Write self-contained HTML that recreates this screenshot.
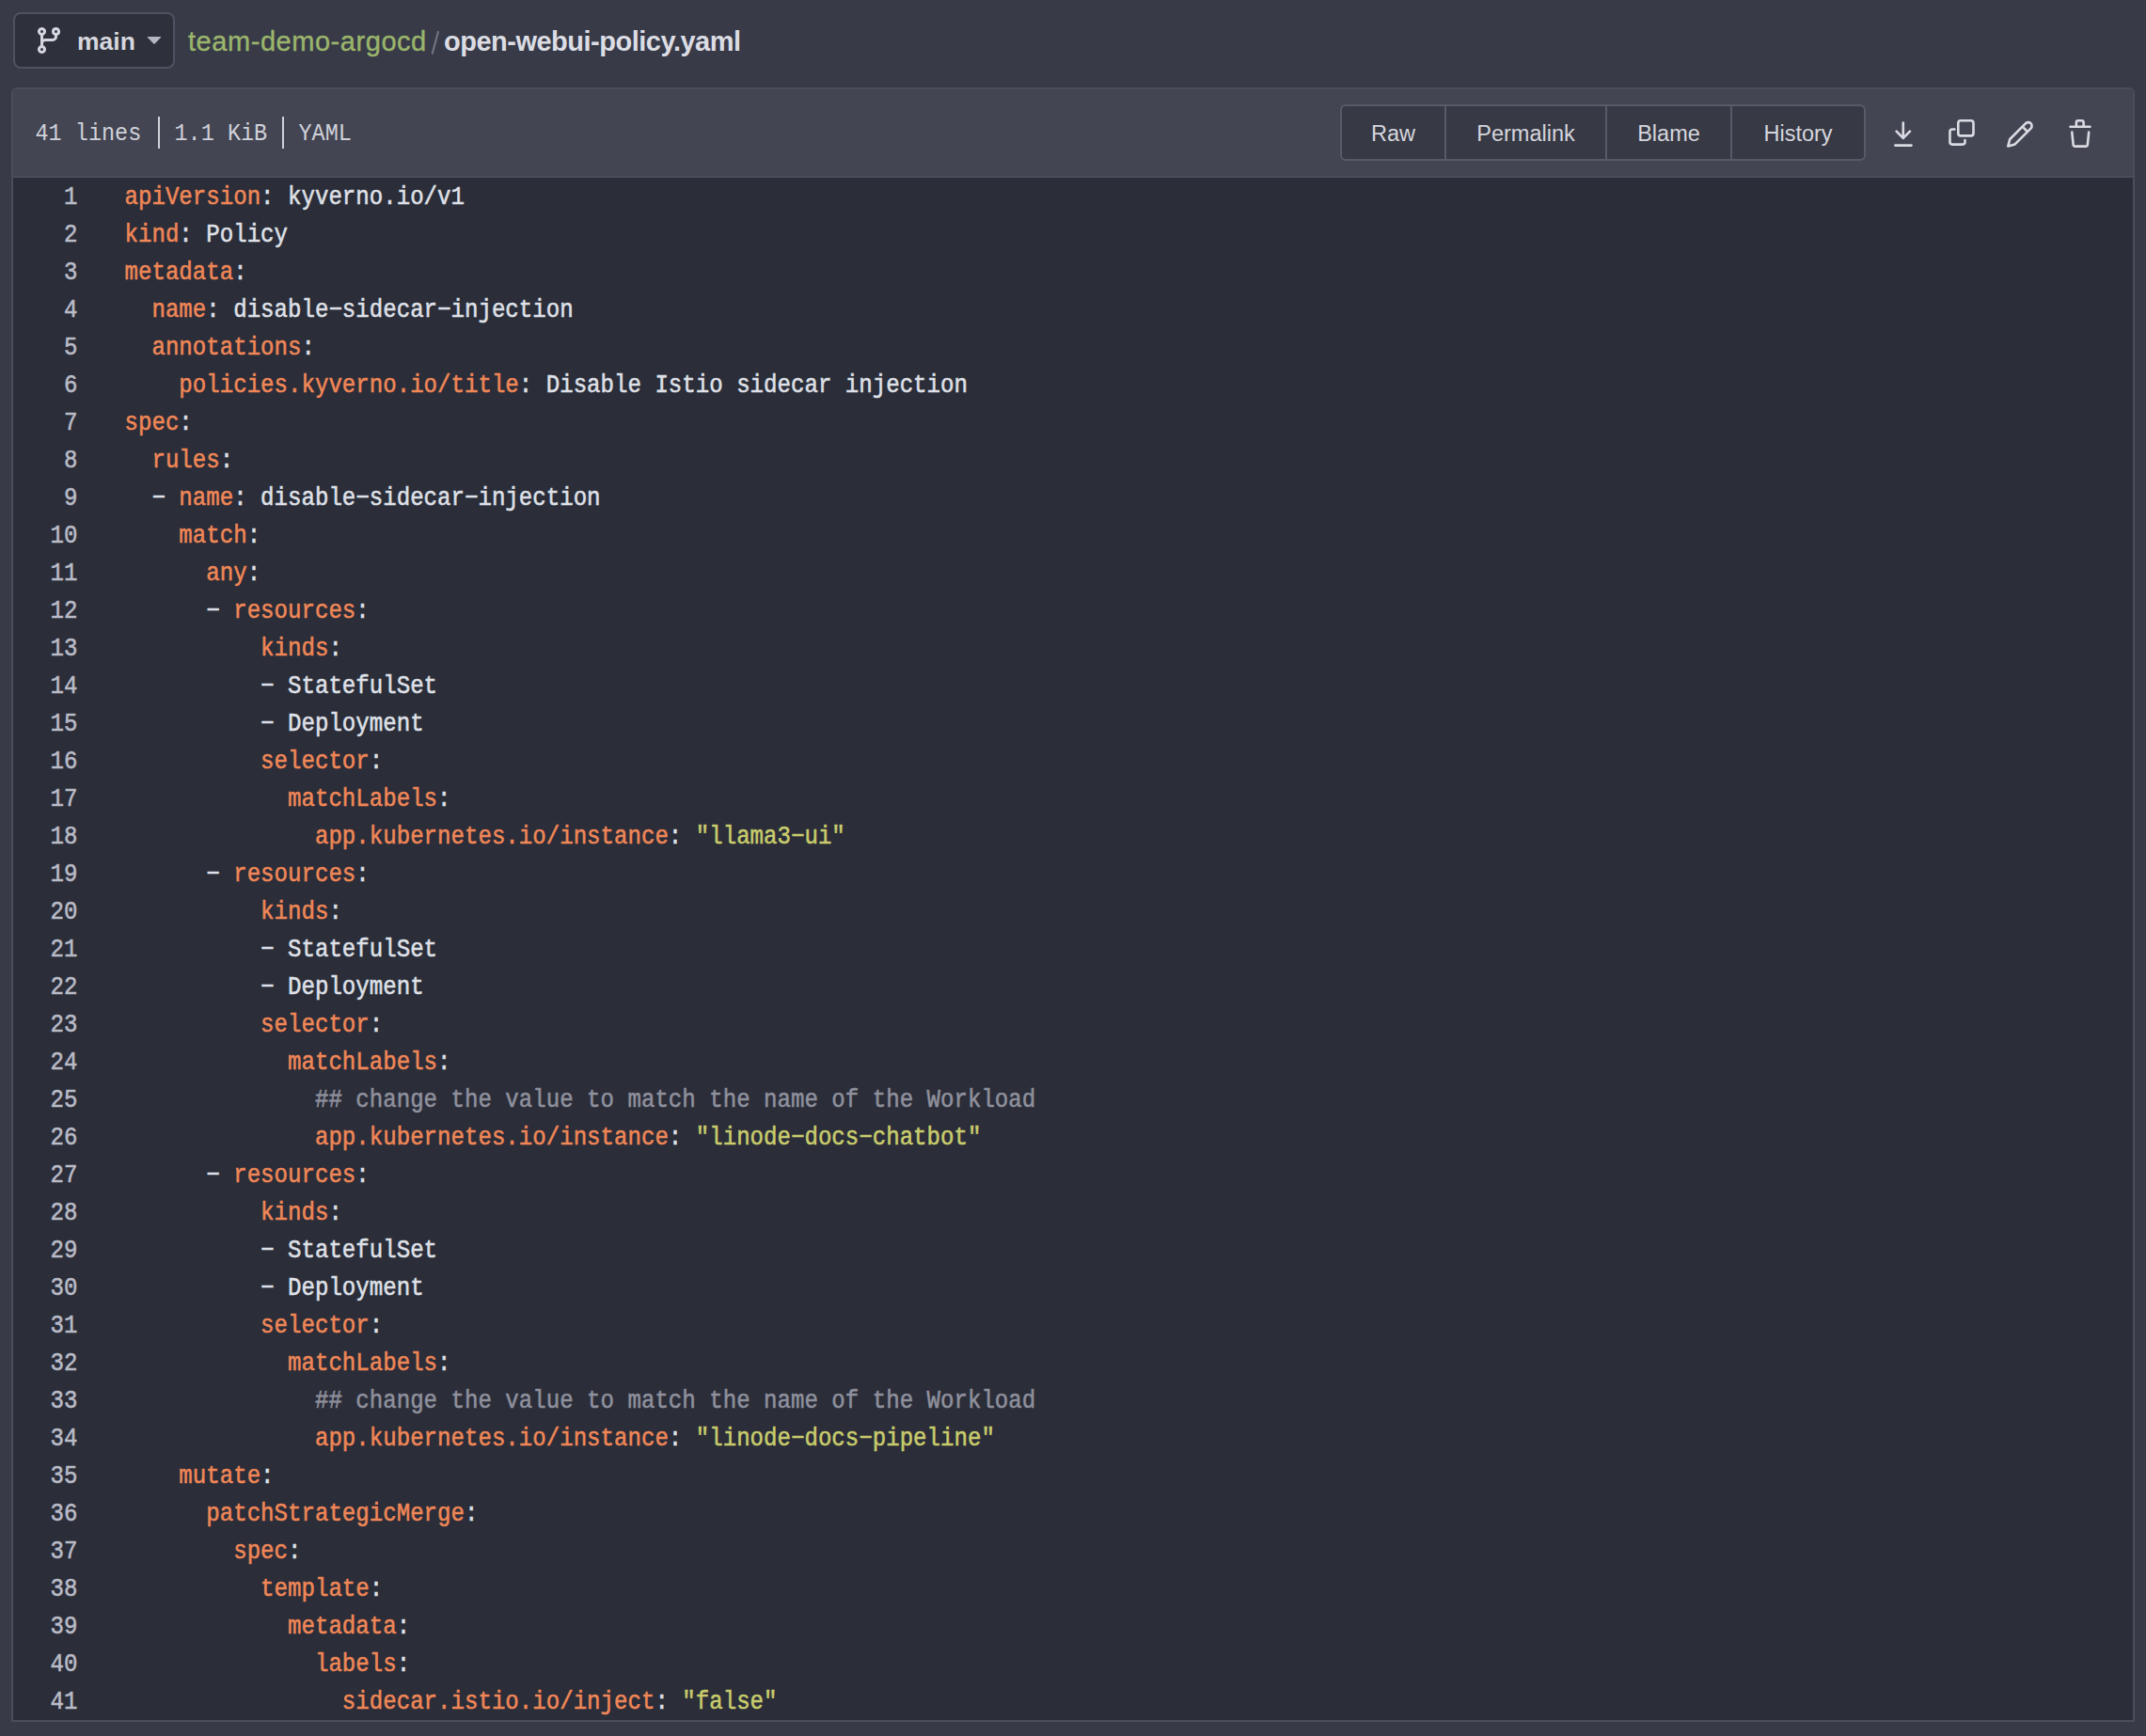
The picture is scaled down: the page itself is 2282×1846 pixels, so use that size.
<!DOCTYPE html>
<html><head><meta charset="utf-8">
<style>
html,body{margin:0;padding:0;}
body{width:2282px;height:1846px;background:#383a47;overflow:hidden;position:relative;font-family:"Liberation Sans",sans-serif;}
.abs{position:absolute;white-space:pre;}
.branch{position:absolute;left:14px;top:13px;width:168px;height:56px;border:2px solid #4f5261;border-radius:8px;background:#2e303b;}
.main{font-weight:bold;font-size:26.5px;color:#d6d7de;line-height:40px;}
.crumb{font-size:29px;line-height:40px;}
.g{color:#9ab56c;letter-spacing:0.55px;-webkit-text-stroke:0.4px currentColor;}
.sl{color:#777a87;}
.fn{color:#dcdde4;font-weight:bold;letter-spacing:-0.5px;}
.box{position:absolute;left:12px;top:93px;width:2254px;height:1734px;border:2px solid #4a4d5a;border-radius:6px 6px 0 0;background:#2b2d39;overflow:hidden;}
.hdr{position:absolute;left:0;top:0;right:0;height:92px;background:#434553;border-bottom:2px solid #4a4d5a;}
.meta{font-family:"Liberation Mono",monospace;font-size:23.5px;color:#d0d1d9;line-height:40px;transform:scaleY(1.12);transform-origin:0 27px;}
.dv{position:absolute;width:2px;background:#cfd0d8;}
.btns{position:absolute;left:1411px;top:16px;width:555px;height:56px;border:2px solid #575a67;border-radius:6px;background:#373945;overflow:hidden;}
.bt{position:absolute;top:1px;height:56px;line-height:56px;font-size:23.5px;color:#d5d6dd;text-align:center;}
.bd{position:absolute;top:0;width:2px;height:56px;background:#575a67;}
.ic{position:absolute;}
.code{position:absolute;left:0;top:94px;right:0;}
.ln{height:40px;line-height:40px;white-space:pre;font-family:"Liberation Mono",monospace;font-size:24.1px;color:#dfe0e7;position:relative;-webkit-text-stroke:0.5px currentColor;}
.ln .n{position:absolute;right:2185.5px;color:#b9bbc6;transform:scaleY(1.12);transform-origin:0 25px;top:2px;}
.ln .t{position:absolute;left:118.5px;transform:scaleY(1.12);transform-origin:0 25px;top:2px;}
.k{color:#ef8757;}
.s{color:#c8cc6c;}
.c{color:#8e909c;}
</style></head><body>
<div class="branch"></div>
<svg class="ic" style="left:36px;top:27px" width="32" height="32" viewBox="0 0 16 16" fill="#d6d7de"><path d="M9.5 3.25a2.25 2.25 0 1 1 3 2.122V6A2.5 2.5 0 0 1 10 8.5H6a1 1 0 0 0-1 1v1.128a2.251 2.251 0 1 1-1.5 0V5.372a2.25 2.25 0 1 1 1.5 0v1.836A2.493 2.493 0 0 1 6 7h4a1 1 0 0 0 1-1v-.628A2.25 2.25 0 0 1 9.5 3.25Zm-6 0a.75.75 0 1 0 1.5 0 .75.75 0 0 0-1.5 0Zm8.25-.75a.75.75 0 1 0 0 1.5.75.75 0 0 0 0-1.5ZM4.25 12a.75.75 0 1 0 0 1.5.75.75 0 0 0 0-1.5Z"/></svg>
<div class="abs main" style="left:82px;top:24px">main</div>
<svg class="ic" style="left:148px;top:25px" width="32" height="32" viewBox="0 0 16 16" fill="#b4b6c0"><path d="m4.427 7.427 3.396 3.396a.25.25 0 0 0 .354 0l3.396-3.396A.25.25 0 0 0 11.396 7H4.604a.25.25 0 0 0-.177.427Z"/></svg>
<div class="abs crumb" style="left:200px;top:24px"><span class="g">team-demo-argocd</span></div>
<svg class="ic" style="left:450px;top:25px" width="30" height="40" viewBox="450 25 30 40"><path d="M459.8 56.6L466 33.8" stroke="#6f7280" stroke-width="2.2" stroke-linecap="round"/></svg>
<div class="abs crumb fn" style="left:472px;top:24px">open-webui-policy.yaml</div>
<div class="box">
 <div class="hdr">
  <div class="abs meta" style="left:23.5px;top:28px">41 lines</div>
  <div class="dv" style="left:154px;top:29px;height:34px"></div>
  <div class="abs meta" style="left:171.5px;top:28px">1.1 KiB</div>
  <div class="dv" style="left:286px;top:29px;height:34px"></div>
  <div class="abs meta" style="left:303.5px;top:28px">YAML</div>
  <div class="btns">
   <div class="bt" style="left:0;width:109px">Raw</div>
   <div class="bd" style="left:109px"></div>
   <div class="bt" style="left:111px;width:169px">Permalink</div>
   <div class="bd" style="left:280px"></div>
   <div class="bt" style="left:282px;width:131px">Blame</div>
   <div class="bd" style="left:413px"></div>
   <div class="bt" style="left:415px;width:140px">History</div>
  </div>
 </div>
 <div class="code">
<div class="ln"><span class="n">1</span><span class="t"><span class="k">apiVersion</span>: kyverno.io/v1</span></div>
<div class="ln"><span class="n">2</span><span class="t"><span class="k">kind</span>: Policy</span></div>
<div class="ln"><span class="n">3</span><span class="t"><span class="k">metadata</span>:</span></div>
<div class="ln"><span class="n">4</span><span class="t">  <span class="k">name</span>: disable−sidecar−injection</span></div>
<div class="ln"><span class="n">5</span><span class="t">  <span class="k">annotations</span>:</span></div>
<div class="ln"><span class="n">6</span><span class="t">    <span class="k">policies.kyverno.io/title</span>: Disable Istio sidecar injection</span></div>
<div class="ln"><span class="n">7</span><span class="t"><span class="k">spec</span>:</span></div>
<div class="ln"><span class="n">8</span><span class="t">  <span class="k">rules</span>:</span></div>
<div class="ln"><span class="n">9</span><span class="t">  − <span class="k">name</span>: disable−sidecar−injection</span></div>
<div class="ln"><span class="n">10</span><span class="t">    <span class="k">match</span>:</span></div>
<div class="ln"><span class="n">11</span><span class="t">      <span class="k">any</span>:</span></div>
<div class="ln"><span class="n">12</span><span class="t">      − <span class="k">resources</span>:</span></div>
<div class="ln"><span class="n">13</span><span class="t">          <span class="k">kinds</span>:</span></div>
<div class="ln"><span class="n">14</span><span class="t">          − StatefulSet</span></div>
<div class="ln"><span class="n">15</span><span class="t">          − Deployment</span></div>
<div class="ln"><span class="n">16</span><span class="t">          <span class="k">selector</span>:</span></div>
<div class="ln"><span class="n">17</span><span class="t">            <span class="k">matchLabels</span>:</span></div>
<div class="ln"><span class="n">18</span><span class="t">              <span class="k">app.kubernetes.io/instance</span>: <span class="s">&quot;llama3−ui&quot;</span></span></div>
<div class="ln"><span class="n">19</span><span class="t">      − <span class="k">resources</span>:</span></div>
<div class="ln"><span class="n">20</span><span class="t">          <span class="k">kinds</span>:</span></div>
<div class="ln"><span class="n">21</span><span class="t">          − StatefulSet</span></div>
<div class="ln"><span class="n">22</span><span class="t">          − Deployment</span></div>
<div class="ln"><span class="n">23</span><span class="t">          <span class="k">selector</span>:</span></div>
<div class="ln"><span class="n">24</span><span class="t">            <span class="k">matchLabels</span>:</span></div>
<div class="ln"><span class="n">25</span><span class="t">              <span class="c">## change the value to match the name of the Workload</span></span></div>
<div class="ln"><span class="n">26</span><span class="t">              <span class="k">app.kubernetes.io/instance</span>: <span class="s">&quot;linode−docs−chatbot&quot;</span></span></div>
<div class="ln"><span class="n">27</span><span class="t">      − <span class="k">resources</span>:</span></div>
<div class="ln"><span class="n">28</span><span class="t">          <span class="k">kinds</span>:</span></div>
<div class="ln"><span class="n">29</span><span class="t">          − StatefulSet</span></div>
<div class="ln"><span class="n">30</span><span class="t">          − Deployment</span></div>
<div class="ln"><span class="n">31</span><span class="t">          <span class="k">selector</span>:</span></div>
<div class="ln"><span class="n">32</span><span class="t">            <span class="k">matchLabels</span>:</span></div>
<div class="ln"><span class="n">33</span><span class="t">              <span class="c">## change the value to match the name of the Workload</span></span></div>
<div class="ln"><span class="n">34</span><span class="t">              <span class="k">app.kubernetes.io/instance</span>: <span class="s">&quot;linode−docs−pipeline&quot;</span></span></div>
<div class="ln"><span class="n">35</span><span class="t">    <span class="k">mutate</span>:</span></div>
<div class="ln"><span class="n">36</span><span class="t">      <span class="k">patchStrategicMerge</span>:</span></div>
<div class="ln"><span class="n">37</span><span class="t">        <span class="k">spec</span>:</span></div>
<div class="ln"><span class="n">38</span><span class="t">          <span class="k">template</span>:</span></div>
<div class="ln"><span class="n">39</span><span class="t">            <span class="k">metadata</span>:</span></div>
<div class="ln"><span class="n">40</span><span class="t">              <span class="k">labels</span>:</span></div>
<div class="ln"><span class="n">41</span><span class="t">                <span class="k">sidecar.istio.io/inject</span>: <span class="s">&quot;false&quot;</span></span></div>
 </div>
</div>
<svg class="ic" style="left:2000px;top:110px" width="240" height="60" viewBox="2000 110 240 60" fill="none" stroke="#dadbe2" stroke-width="2.6" stroke-linecap="round" stroke-linejoin="round">
<path d="M2023.8 130.5V147M2016.6 139.6L2023.8 146.8L2031 139.6M2015.4 154.6H2032.5"/>
<rect x="2082.3" y="128.3" width="16.2" height="16.1" rx="2.6"/>
<path d="M2078.4 137.5H2076A2.5 2.5 0 0 0 2073.5 140V151.1A2.5 2.5 0 0 0 2076 153.6H2087A2.5 2.5 0 0 0 2089.5 151.1V149"/>
<path d="M2135.29 155.39L2137.27 148.03L2154.09 131.20A3.8 3.8 0 0 1 2159.47 136.58L2142.64 153.41ZM2150.63 134.67L2156.00 140.04"/>
<path d="M2201.5 134.7H2222.5M2207.9 134.7V130.2A2 2 0 0 1 2209.9 128.2H2213.6A2 2 0 0 1 2215.6 130.2V134.7"/>
<path d="M2203.3 140.5L2204.6 153.5A2.2 2.2 0 0 0 2206.8 155.6H2217.7A2.2 2.2 0 0 0 2219.9 153.5L2221.2 140.5"/>
</svg>

</body></html>
